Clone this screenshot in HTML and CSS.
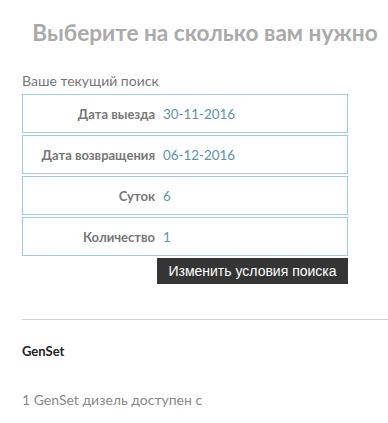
FILE: index.html
```html
<!DOCTYPE html>
<html lang="ru">
<head>
<meta charset="utf-8">
<link rel="stylesheet" href="styles.css">
</head>
<body>
<div class="page">
  <h1 class="title">Выберите на сколько вам нужно</h1>
  <div class="search">
    <div class="search-caption">Ваше текущий поиск</div>
    <div class="rows">
      <div class="row"><span class="label">Дата выезда</span><span class="value">30-11-2016</span></div>
      <div class="row"><span class="label">Дата возвращения</span><span class="value">06-12-2016</span></div>
      <div class="row"><span class="label">Суток</span><span class="value">6</span></div>
      <div class="row"><span class="label">Количество</span><span class="value">1</span></div>
    </div>
    <div class="actions"><button class="btn">Изменить условия поиска</button></div>
  </div>
  <hr class="divider">
  <div class="product-name">GenSet</div>
  <div class="product-desc">1 GenSet дизель доступен с</div>
</div>
</body>
</html>
```
FILE: styles.css
```css
html, body {
  margin: 0;
  padding: 0;
  background: #fff;
}
body {
  font-family: Lato, "Noto Sans", sans-serif;
  color: #777;
}
.page {
  padding: 0 0 0 22px;
}
.title {
  margin: 0;
  padding-top: 18px;
  height: 30px;
  text-align: center;
  font-size: 22.6px;
  font-weight: bold;
  color: #aaa;
  line-height: 30px;
  white-space: nowrap;
}
.search {
  width: 326px;
  margin-top: 24px;
}
.search-caption {
  font-size: 14px;
  line-height: 18px;
  color: #777;
  height: 22px;
}
.rows {
  display: flex;
  flex-direction: column;
  gap: 2px;
}
.row {
  height: 37px;
  border: 1px solid #a3cad6;
  display: flex;
  align-items: center;
  font-size: 13px;
}
.label {
  width: 132px;
  text-align: right;
  font-weight: bold;
  color: #777;
}
.value {
  margin-left: 8px;
  color: #5b93ac;
  font-size: 13.4px;
}
.actions {
  display: flex;
  justify-content: flex-end;
  margin-top: 2px;
}
.btn {
  height: 26px;
  width: 191px;
  border: 0;
  background: #353535;
  color: #fff;
  font-family: "Liberation Sans", Arial, sans-serif;
  font-size: 14px;
  padding: 0;
}
.divider {
  margin: 35px 0 0 0;
  border: 0;
  border-top: 1px solid #d0d0d0;
  height: 0;
}
.product-name {
  margin-top: 22px;
  font-size: 13px;
  font-weight: bold;
  color: #222;
  line-height: 18px;
}
.product-desc {
  margin-top: 31px;
  font-size: 14px;
  color: #888;
  line-height: 18px;
}
```
